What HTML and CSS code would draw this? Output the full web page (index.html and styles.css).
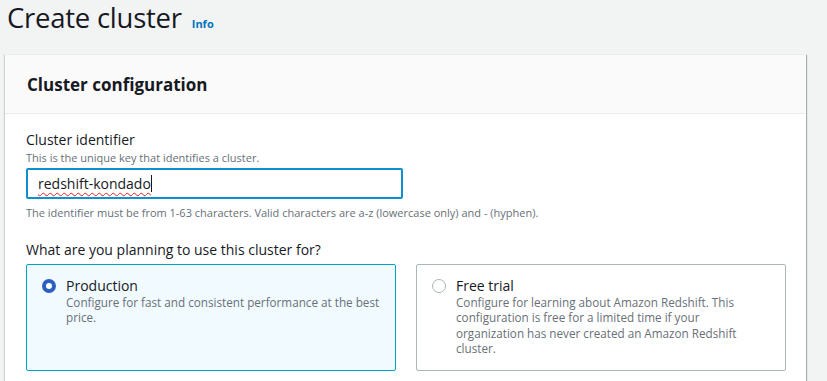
FILE: index.html
```html
<!DOCTYPE html>
<html>
<head>
<meta charset="utf-8">
<link rel="stylesheet" href="styles.css">
</head>
<body>
<div class="page">
  <div class="title-row">
    <h1 class="title">Create cluster</h1>
    <a class="info">Info</a>
  </div>
  <div class="card">
    <div class="card-header">
      <h2 class="card-title">Cluster configuration</h2>
    </div>
    <div class="card-body">
      <div class="field">
        <div class="label">Cluster identifier</div>
        <div class="desc">This is the unique key that identifies a cluster.</div>
        <div class="input"><span class="input-text">redshift-kondado</span><span class="caret"></span></div>
        <div class="constraint">The identifier must be from 1-63 characters. Valid characters are a-z (lowercase only) and - (hyphen).</div>
      </div>
      <div class="label question">What are you planning to use this cluster for?</div>
      <div class="tiles">
        <div class="tile selected">
          <span class="radio checked"></span>
          <div class="tile-text wide">
            <div class="tile-title">Production</div>
            <div class="tile-desc">Configure for fast and consistent performance at the best price.</div>
          </div>
        </div>
        <div class="tile">
          <span class="radio"></span>
          <div class="tile-text">
            <div class="tile-title">Free trial</div>
            <div class="tile-desc">Configure for learning about Amazon Redshift. This configuration is free for a limited time if your organization has never created an Amazon Redshift cluster.</div>
          </div>
        </div>
      </div>
    </div>
  </div>
</div>
</body>
</html>
```
FILE: styles.css
```css
* { box-sizing: border-box; }
html, body { margin: 0; padding: 0; }
body {
  background: #f2f3f3;
  font-family: "Open Sans", "Noto Sans", sans-serif;
  color: #16191f;
  width: 827px;
  height: 381px;
  overflow: hidden;
}
.page { padding: 0 21px 0 5px; }
.title-row {
  display: flex;
  align-items: baseline;
  padding-left: 2px;
  height: 54px;
}
.title {
  margin: 0;
  font-size: 27.5px;
  font-weight: 400;
  line-height: 36px;
  letter-spacing: -0.25px;
}
.info {
  margin-left: 10px;
  font-size: 11px;
  font-weight: 700;
  color: #0073bb;
}
.card {
  background: #fff;
  border-top: 1px solid #eaeded;
  box-shadow: 1px 1px 1px rgba(0, 28, 36, 0.3), -1px 1px 1px rgba(0, 28, 36, 0.15);
}
.card-header {
  background: #fafafa;
  border-bottom: 1px solid #eaeded;
  height: 59px;
  display: flex;
  align-items: center;
  padding-left: 22px;
}
.card-title {
  margin: 0;
  font-size: 17px;
  font-weight: 700;
}
.card-body { padding: 16px 20px 20px 21px; }
.label { font-size: 14px; line-height: 20px; }
.desc, .constraint { font-size: 11px; line-height: 16px; color: #687078; }
.input {
  margin-top: 2px;
  width: 377px;
  height: 31px;
  border: 2px solid #0f8fcf;
  border-radius: 2px;
  display: flex;
  align-items: center;
  padding-left: 10px;
  font-size: 14px;
}
.input-text {
  text-decoration: underline wavy #e02020;
  text-decoration-thickness: 1px;
  text-underline-offset: 3px;
}
.caret { width: 1px; height: 17px; background: #16191f; }
.constraint { margin-top: 6px; }
.question { margin-top: 19px; }
.tiles {
  margin-top: 4px;
  display: flex;
  gap: 20px;
}
.tile {
  width: 370px;
  height: 107px;
  border: 1px solid #aab7b8;
  border-radius: 2px;
  display: flex;
  padding: 12px 4px 12px 15px;
  gap: 10px;
}
.tile.selected { background: #f1faff; border-color: #00a1c9; }
.tile-text { flex: none; width: 313px; }
.tile-text.wide { width: 324px; }
.radio {
  flex: none;
  width: 14px;
  height: 14px;
  margin-top: 2px;
  border-radius: 50%;
  border: 1px solid #aab7b8;
  background: #fff;
}
.radio.checked { border: 4.5px solid #2c5fbf; }
.tile-title { font-size: 14px; line-height: 18px; }
.tile-desc { font-size: 11.7px; line-height: 15.3px; color: #687078; margin-top: 0; }
```
